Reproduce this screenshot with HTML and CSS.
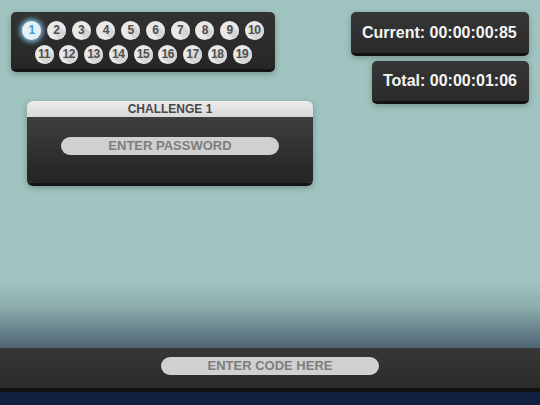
FILE: index.html
```html
<!DOCTYPE html>
<html>
<head>
<meta charset="utf-8">
<link rel="stylesheet" href="styles.css">
</head>
<body>
<div class="top">
  <div class="left">
    <div class="levels">
      <span class="lvl active">1</span><span class="lvl">2</span><span class="lvl">3</span><span class="lvl">4</span><span class="lvl">5</span><span class="lvl">6</span><span class="lvl">7</span><span class="lvl">8</span><span class="lvl">9</span><span class="lvl">10</span>
      <span class="lvl">11</span><span class="lvl">12</span><span class="lvl">13</span><span class="lvl">14</span><span class="lvl">15</span><span class="lvl">16</span><span class="lvl">17</span><span class="lvl">18</span><span class="lvl">19</span>
    </div>
    <div class="challenge">
      <div class="challenge-title">CHALLENGE 1</div>
      <div class="challenge-body">
        <div class="pill">ENTER PASSWORD</div>
      </div>
    </div>
  </div>
  <div class="right">
    <div class="timer current">Current: 00:00:00:85</div>
    <div class="timer total">Total: 00:00:01:06</div>
  </div>
</div>
<div class="bottombar">
  <div class="pill">ENTER CODE HERE</div>
</div>
<div class="footer"></div>
</body>
</html>
```
FILE: styles.css
```css
html, body {
  margin: 0;
  padding: 0;
}
body {
  width: 540px;
  height: 405px;
  overflow: hidden;
  display: flex;
  flex-direction: column;
  font-family: "Liberation Sans", Arial, sans-serif;
  background: linear-gradient(to bottom, #a0c4bf 0, #a0c4bf 280px, #8fb0ae 305px, #4e6474 348px);
}
.top {
  display: flex;
  justify-content: space-between;
  align-items: flex-start;
  padding: 12px 11px 0 11px;
}
.left {
  display: flex;
  flex-direction: column;
}
.levels {
  width: 264px;
  box-sizing: border-box;
  padding: 9px 8px 5px 8px;
  display: flex;
  flex-wrap: wrap;
  justify-content: center;
  column-gap: 5.75px;
  row-gap: 5px;
  background: linear-gradient(to bottom, #323232, #262626);
  border-radius: 5px;
  border-bottom: 3px solid #141414;
  box-shadow: 0 2px 6px rgba(0, 0, 0, 0.25);
}
.lvl {
  width: 19px;
  height: 19px;
  border-radius: 50%;
  overflow: hidden;
  background: #e9e9e9;
  color: #505050;
  font-weight: bold;
  font-size: 12px;
  line-height: 19px;
  text-align: center;
  letter-spacing: -0.3px;
  text-shadow: 1px 1px #d6d6d6, 2px 2px #d6d6d6, 3px 3px #d6d6d6, 4px 4px #d6d6d6, 5px 5px #d6d6d6, 6px 6px #d6d6d6, 7px 7px #d6d6d6, 8px 8px #d6d6d6, 9px 9px #d6d6d6, 10px 10px #d6d6d6;
}
.lvl.active {
  overflow: visible;
  background: #e4f0f6;
  color: #3aa0d6;
  text-shadow: none;
  box-shadow: 0 0 5px 2px rgba(140, 210, 255, 0.85);
}
.challenge {
  margin: 29px 0 0 16px;
  width: 286px;
  border-radius: 6px;
  overflow: hidden;
  border-bottom: 3px solid #141414;
  box-shadow: 0 2px 6px rgba(0, 0, 0, 0.25);
}
.challenge-title {
  height: 16px;
  line-height: 16px;
  text-align: center;
  font-size: 12px;
  font-weight: bold;
  color: #474747;
  background: linear-gradient(to bottom, #ececec, #d9d9d9);
}
.challenge-body {
  height: 66px;
  box-sizing: border-box;
  padding-top: 20px;
  display: flex;
  justify-content: center;
  background: linear-gradient(to bottom, #3e3e3e, #242424);
}
.pill {
  width: 218px;
  height: 18px;
  line-height: 18px;
  border-radius: 9px;
  background: #d0d0d0;
  color: #7e7e7e;
  font-size: 13px;
  font-weight: bold;
  text-align: center;
}
.right {
  display: flex;
  flex-direction: column;
  align-items: flex-end;
  gap: 5px;
}
.timer {
  box-sizing: border-box;
  padding: 0 11px;
  color: #f4f4f4;
  font-size: 16px;
  font-weight: bold;
  background: linear-gradient(to bottom, #363636, #2a2a2a);
  border-radius: 5px;
  border-bottom: 3px solid #141414;
  box-shadow: 0 2px 6px rgba(0, 0, 0, 0.25);
}
.timer.current {
  width: 178px;
  height: 44px;
  line-height: 41px;
}
.timer.total {
  width: 157px;
  height: 43px;
  line-height: 40px;
}
.bottombar {
  margin-top: auto;
  height: 44px;
  box-sizing: border-box;
  padding-top: 9px;
  display: flex;
  justify-content: center;
  background: linear-gradient(to bottom, #373737, #2b2b2b);
  border-bottom: 4px solid #121212;
}
.footer {
  height: 13px;
  background: #10203e;
}
```
